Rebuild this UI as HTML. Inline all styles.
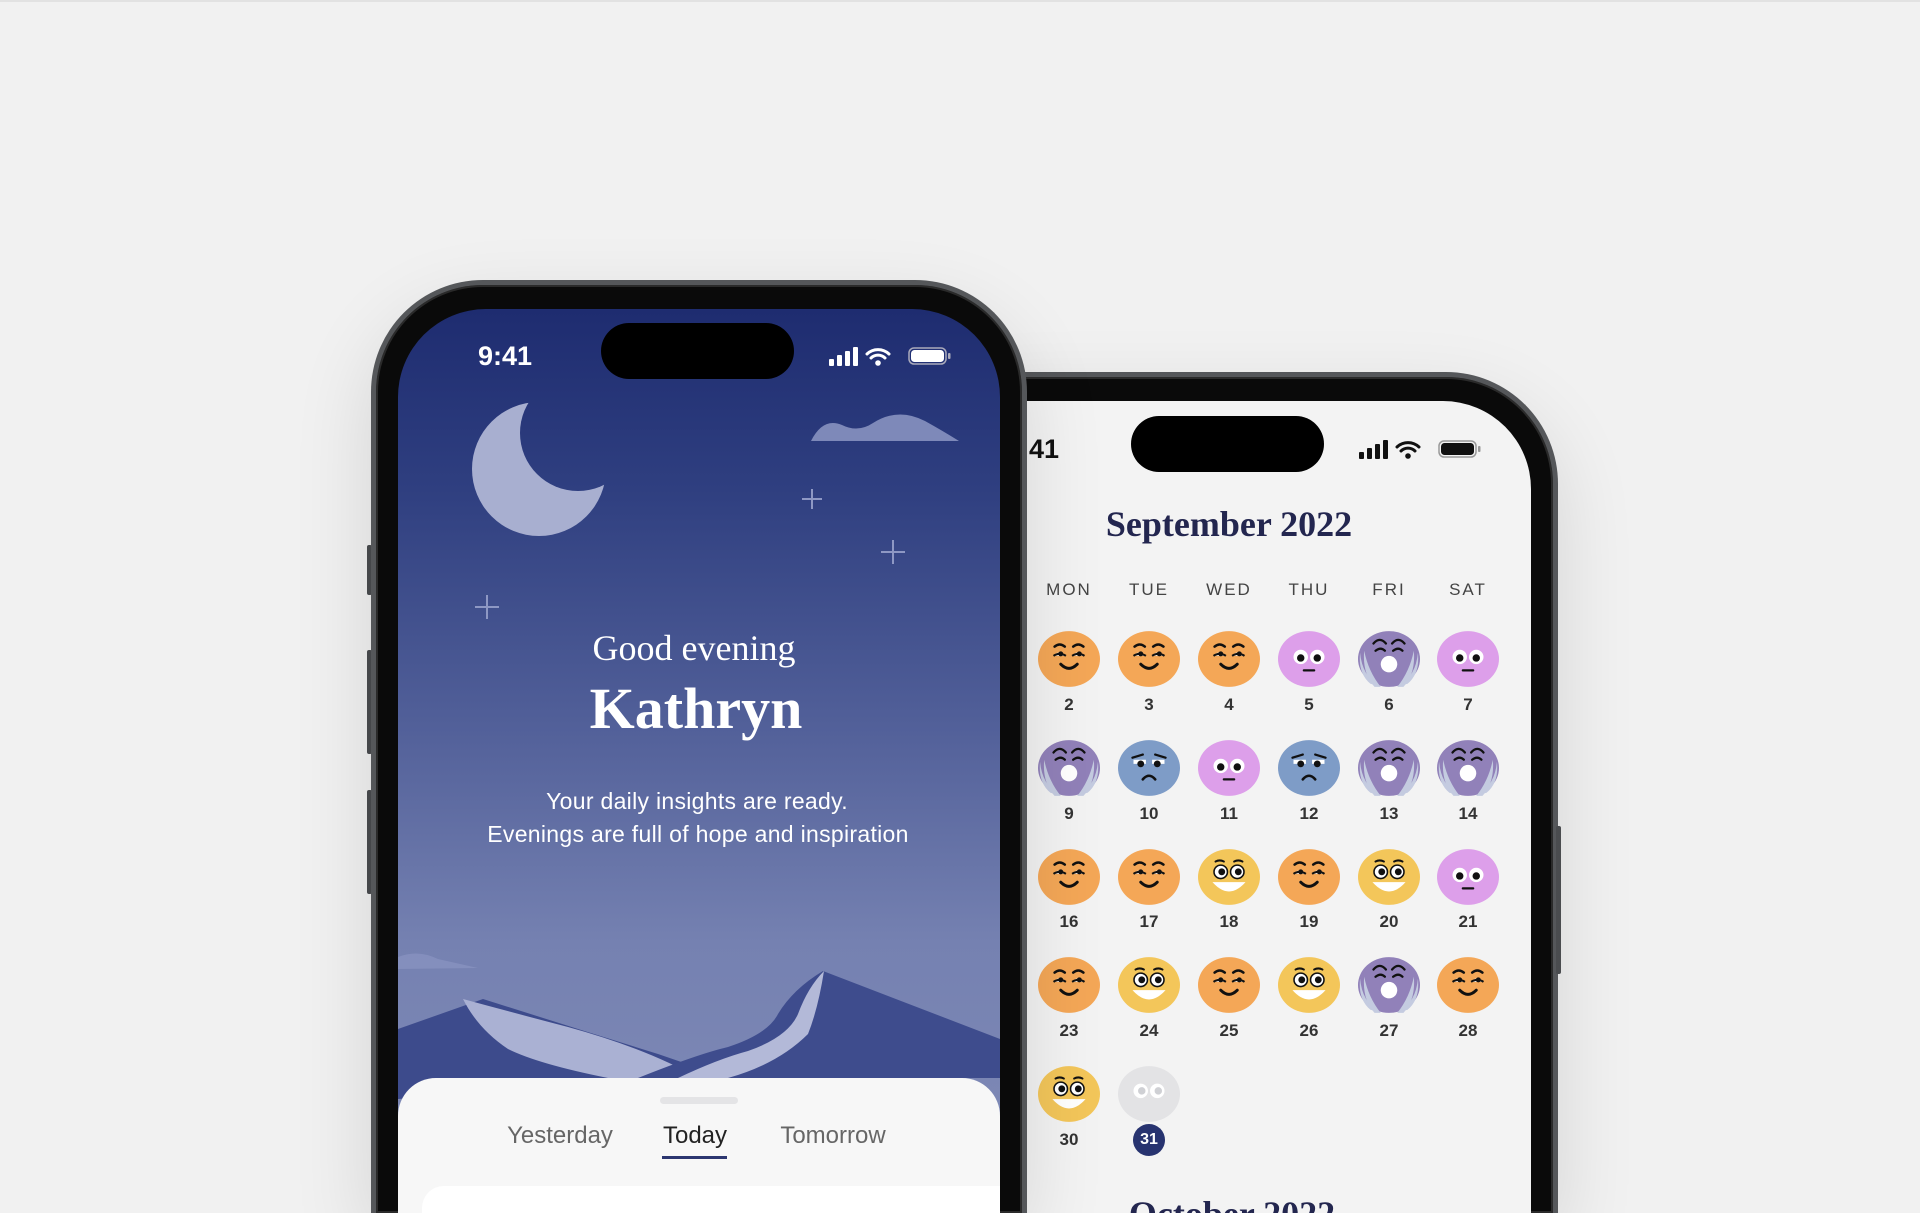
<!DOCTYPE html>
<html><head><meta charset="utf-8"><style>
*{margin:0;padding:0;box-sizing:border-box}
html,body{width:1920px;height:1213px;overflow:hidden}
body{background:#f1f1f1;font-family:"Liberation Sans",sans-serif}
#wrap{position:relative;width:1920px;height:1213px;overflow:hidden;background:#f1f1f1}
.topline{position:absolute;left:0;top:0;width:1920px;height:2px;background:#e2e2e2}
.phone{position:absolute;width:656px;border-radius:112px 112px 0 0;background:#0a0a0a;border:5px solid #55575a;border-bottom:none;box-shadow:0 0 0 2px #2a2a2a inset,0 30px 80px rgba(0,0,0,.12);overflow:hidden}
.screen{position:absolute;left:22px;top:24px;width:602px;border-radius:88px 88px 0 0;overflow:hidden}
.island{position:absolute;width:193px;height:56px;border-radius:28px;background:#000}
.btn{position:absolute;width:5px;background:#4a4c4f;border-radius:2px}
.abs{position:absolute}
.c{position:absolute;transform:translateX(-50%);white-space:nowrap}
.wd{position:absolute;transform:translateX(-50%);font-size:17px;letter-spacing:2px;color:#444;top:580px}
.num{position:absolute;transform:translateX(-50%);font-size:17px;font-weight:bold;color:#333}
.face{position:absolute;width:62px;height:58px}
</style></head><body><div id="wrap">
<div class="topline"></div>
<svg width="0" height="0" style="position:absolute">
<defs>
<g id="happy"><ellipse cx="30" cy="28" rx="30" ry="27" fill="#f4a757"/>
<path d="M16 16q5-4 10 0M34 16q5-4 10 0" stroke="#111" stroke-width="2.4" fill="none" stroke-linecap="round"/>
<path d="M15 25q6-7 12 0zM33 25q6-7 12 0z" fill="#fff"/><circle cx="22" cy="23" r="2.4" fill="#111"/><circle cx="40" cy="23" r="2.4" fill="#111"/>
<path d="M15 25q6-4 12 0M33 25q6-4 12 0" stroke="#111" stroke-width="2" fill="none"/>
<path d="M22 33q8 8 16 0" stroke="#111" stroke-width="2.8" fill="none" stroke-linecap="round"/></g>
<g id="neutral"><ellipse cx="30" cy="28" rx="30" ry="27" fill="#dd9fea"/>
<circle cx="22" cy="26" r="7" fill="#fff"/><circle cx="38" cy="26" r="7" fill="#fff"/><circle cx="22" cy="27" r="3.6" fill="#111"/><circle cx="38" cy="27" r="3.6" fill="#111"/>
<path d="M25 39h10" stroke="#111" stroke-width="2.2" stroke-linecap="round"/></g>
<g id="cry"><ellipse cx="30" cy="28" rx="30" ry="27" fill="#9181b9"/>
<path d="M2 22Q4 44 20 54L12 52Q0 42 2 22zM58 22Q56 44 40 54L48 52Q60 42 58 22z" fill="#c4cbe0"/>
<path d="M6 20Q10 40 22 55L16 55Q4 42 6 20zM54 20Q50 40 38 55L44 55Q56 42 54 20z" fill="#c4cbe0"/>
<path d="M15 13q6-7 12 0M33 13q6-7 12 0M17 20q5-4 9 0M34 20q5-4 9 0" stroke="#111" stroke-width="2.2" fill="none" stroke-linecap="round"/>
<circle cx="30" cy="33" r="8" fill="#fff"/></g>
<g id="sad"><ellipse cx="30" cy="28" rx="30" ry="27" fill="#7e9cc7"/>
<path d="M14 18l10-3M46 18l-10-3" stroke="#111" stroke-width="2.2" stroke-linecap="round"/>
<path d="M15 22h12M33 22h12" stroke="#fff" stroke-width="4"/><circle cx="22" cy="24" r="3.3" fill="#111"/><circle cx="38" cy="24" r="3.3" fill="#111"/>
<path d="M24 39q6-7 12 0" stroke="#111" stroke-width="2.5" fill="none" stroke-linecap="round"/></g>
<g id="joy"><ellipse cx="30" cy="28" rx="30" ry="27" fill="#f3c65a"/>
<path d="M17 13q4-2 8 0M35 13q4-2 8 0" stroke="#111" stroke-width="2" fill="none" stroke-linecap="round"/>
<circle cx="22" cy="23" r="6.5" fill="#fff" stroke="#111" stroke-width="1.5"/><circle cx="38" cy="23" r="6.5" fill="#fff" stroke="#111" stroke-width="1.5"/><circle cx="23" cy="23" r="3.3" fill="#111"/><circle cx="39" cy="23" r="3.3" fill="#111"/>
<path d="M14 33q16 18 32 0z" fill="#fff"/></g>
<g id="grey"><ellipse cx="30" cy="28" rx="30" ry="27" fill="#e3e3e5"/>
<circle cx="22" cy="25" r="7" fill="#fff"/><circle cx="38" cy="25" r="7" fill="#fff"/><circle cx="23" cy="25" r="3.6" fill="#cfd0d4"/><circle cx="39" cy="25" r="3.6" fill="#cfd0d4"/></g>
</defs></svg>

<div class="phone" style="left:902px;top:372px;height:841px">
  <div class="screen" style="background:#f3f3f3;height:812px"></div>
</div>
<div class="btn" style="left:1556px;top:826px;height:148px"></div>
<div class="island" style="left:1131px;top:416px"></div>
<div class="abs" style="left:1020px;top:434px;font-size:27px;font-weight:bold;color:#111">:41</div>
<svg class="abs" style="left:1359px;top:438px" width="124" height="22" viewBox="0 0 124 22">
<rect x="0" y="14" width="5" height="7" rx="1" fill="#111"/><rect x="8" y="10" width="5" height="11" rx="1" fill="#111"/><rect x="16" y="6" width="5" height="15" rx="1" fill="#111"/><rect x="24" y="2" width="5" height="19" rx="1" fill="#111"/>
<path d="M38 9a16 16 0 0 1 22 0M42 13a10 10 0 0 1 14 0" stroke="#111" stroke-width="3" fill="none" stroke-linecap="round"/><circle cx="49" cy="18" r="2.8" fill="#111"/>
<rect x="80" y="3" width="37" height="16" rx="5" fill="none" stroke="#999" stroke-width="1.5"/><rect x="82" y="5" width="33" height="12" rx="3.5" fill="#111"/><rect x="119" y="8" width="2.5" height="6" rx="1" fill="#999"/></svg>
<div class="c" style="left:1229px;top:503px;font-family:'Liberation Serif',serif;font-size:36px;color:#23264f;font-weight:600">September 2022</div>
<div class="wd" style="left:1069px">MON</div><div class="wd" style="left:1149px">TUE</div><div class="wd" style="left:1229px">WED</div><div class="wd" style="left:1309px">THU</div><div class="wd" style="left:1389px">FRI</div><div class="wd" style="left:1468px">SAT</div>

<svg class="face" style="left:1038px;top:630px" viewBox="0 0 60 56"><use href="#happy"/></svg>
<svg class="face" style="left:1118px;top:630px" viewBox="0 0 60 56"><use href="#happy"/></svg>
<svg class="face" style="left:1198px;top:630px" viewBox="0 0 60 56"><use href="#happy"/></svg>
<svg class="face" style="left:1278px;top:630px" viewBox="0 0 60 56"><use href="#neutral"/></svg>
<svg class="face" style="left:1358px;top:630px" viewBox="0 0 60 56"><use href="#cry"/></svg>
<svg class="face" style="left:1437px;top:630px" viewBox="0 0 60 56"><use href="#neutral"/></svg>

<svg class="face" style="left:1038px;top:739px" viewBox="0 0 60 56"><use href="#cry"/></svg>
<svg class="face" style="left:1118px;top:739px" viewBox="0 0 60 56"><use href="#sad"/></svg>
<svg class="face" style="left:1198px;top:739px" viewBox="0 0 60 56"><use href="#neutral"/></svg>
<svg class="face" style="left:1278px;top:739px" viewBox="0 0 60 56"><use href="#sad"/></svg>
<svg class="face" style="left:1358px;top:739px" viewBox="0 0 60 56"><use href="#cry"/></svg>
<svg class="face" style="left:1437px;top:739px" viewBox="0 0 60 56"><use href="#cry"/></svg>

<svg class="face" style="left:1038px;top:848px" viewBox="0 0 60 56"><use href="#happy"/></svg>
<svg class="face" style="left:1118px;top:848px" viewBox="0 0 60 56"><use href="#happy"/></svg>
<svg class="face" style="left:1198px;top:848px" viewBox="0 0 60 56"><use href="#joy"/></svg>
<svg class="face" style="left:1278px;top:848px" viewBox="0 0 60 56"><use href="#happy"/></svg>
<svg class="face" style="left:1358px;top:848px" viewBox="0 0 60 56"><use href="#joy"/></svg>
<svg class="face" style="left:1437px;top:848px" viewBox="0 0 60 56"><use href="#neutral"/></svg>

<svg class="face" style="left:1038px;top:956px" viewBox="0 0 60 56"><use href="#happy"/></svg>
<svg class="face" style="left:1118px;top:956px" viewBox="0 0 60 56"><use href="#joy"/></svg>
<svg class="face" style="left:1198px;top:956px" viewBox="0 0 60 56"><use href="#happy"/></svg>
<svg class="face" style="left:1278px;top:956px" viewBox="0 0 60 56"><use href="#joy"/></svg>
<svg class="face" style="left:1358px;top:956px" viewBox="0 0 60 56"><use href="#cry"/></svg>
<svg class="face" style="left:1437px;top:956px" viewBox="0 0 60 56"><use href="#happy"/></svg>

<svg class="face" style="left:1038px;top:1065px" viewBox="0 0 60 56"><use href="#joy"/></svg>
<svg class="face" style="left:1118px;top:1065px" viewBox="0 0 60 56"><use href="#grey"/></svg>

<div class="num" style="left:1069px;top:695px">2</div><div class="num" style="left:1149px;top:695px">3</div><div class="num" style="left:1229px;top:695px">4</div><div class="num" style="left:1309px;top:695px">5</div><div class="num" style="left:1389px;top:695px">6</div><div class="num" style="left:1468px;top:695px">7</div>
<div class="num" style="left:1069px;top:804px">9</div><div class="num" style="left:1149px;top:804px">10</div><div class="num" style="left:1229px;top:804px">11</div><div class="num" style="left:1309px;top:804px">12</div><div class="num" style="left:1389px;top:804px">13</div><div class="num" style="left:1468px;top:804px">14</div>
<div class="num" style="left:1069px;top:912px">16</div><div class="num" style="left:1149px;top:912px">17</div><div class="num" style="left:1229px;top:912px">18</div><div class="num" style="left:1309px;top:912px">19</div><div class="num" style="left:1389px;top:912px">20</div><div class="num" style="left:1468px;top:912px">21</div>
<div class="num" style="left:1069px;top:1021px">23</div><div class="num" style="left:1149px;top:1021px">24</div><div class="num" style="left:1229px;top:1021px">25</div><div class="num" style="left:1309px;top:1021px">26</div><div class="num" style="left:1389px;top:1021px">27</div><div class="num" style="left:1468px;top:1021px">28</div>
<div class="num" style="left:1069px;top:1130px">30</div>
<div class="abs" style="left:1133px;top:1124px;width:32px;height:32px;border-radius:50%;background:#27336f;color:#fff;font-weight:bold;font-size:16px;text-align:center;line-height:32px">31</div>
<div class="abs" style="left:1082px;top:1193px;width:300px;height:20px;overflow:hidden"><div class="c" style="left:150px;top:0;font-family:'Liberation Serif',serif;font-size:36px;color:#23264f;font-weight:600">October 2022</div></div>

<div class="btn" style="left:367px;top:545px;height:50px"></div>
<div class="btn" style="left:367px;top:650px;height:104px"></div>
<div class="btn" style="left:367px;top:790px;height:104px"></div>
<div class="phone" style="left:371px;top:280px;height:933px">
  <div class="screen" style="height:904px;background:linear-gradient(#1e2c70 0%,#2f3f80 20%,#53619a 47%,#7581b1 70%,#7d88b5 90%)">
    <svg class="abs" style="left:0;top:0" width="602" height="904">
      <defs><mask id="mm"><rect width="602" height="904" fill="#fff"/><circle cx="180" cy="124" r="58" fill="#000"/></mask></defs>
      <circle cx="141" cy="160" r="67" fill="#a8afd0" mask="url(#mm)"/>
      <path d="M413 132Q425 108 444 116Q460 124 475 114Q500 98 527 112Q545 122 561 132Z" fill="#7e89b9"/>
      <path d="M414 180v20M404 190h20M495 231v24M483 243h24M89 286v24M77 298h24" stroke="#8e98c4" stroke-width="2"/>
      <path d="M0 648Q20 640 40 650L80 659L0 660Z" fill="#8a94c2" opacity=".7"/>
      <path d="M0 720L85 690L180 720L260 745L330 769L0 790Z" fill="#3d4b8c"/>
      <path d="M65 690Q120 705 170 718Q250 740 300 769L210 769Q140 755 110 740Q80 720 65 690Z" fill="#aab1d3"/>
      <path d="M240 769Q300 745 330 738Q370 725 380 705Q395 680 425 662L602 730L602 769Z" fill="#3e4c8d"/>
      <path d="M280 769Q320 750 350 742Q390 728 400 705Q410 678 426 662Q420 700 410 725Q380 755 330 769Z" fill="#b3b9d8"/>
    </svg>
    <div class="abs" style="left:0;top:769px;width:602px;height:135px;background:#f7f7f7;border-radius:38px 38px 0 0"></div>
    <div class="abs" style="left:262px;top:788px;width:78px;height:7px;border-radius:4px;background:#e4e4e6"></div>
    <div class="abs" style="left:24px;top:877px;width:578px;height:27px;border-radius:22px 0 0 0;background:#fff"></div>
  </div>
</div>
<div class="island" style="left:601px;top:323px"></div>
<div class="abs" style="left:478px;top:341px;font-size:27px;font-weight:bold;color:#fff">9:41</div>
<svg class="abs" style="left:829px;top:345px" width="124" height="22" viewBox="0 0 124 22">
<rect x="0" y="14" width="5" height="7" rx="1" fill="#fff"/><rect x="8" y="10" width="5" height="11" rx="1" fill="#fff"/><rect x="16" y="6" width="5" height="15" rx="1" fill="#fff"/><rect x="24" y="2" width="5" height="19" rx="1" fill="#fff"/>
<path d="M38 9a16 16 0 0 1 22 0M42 13a10 10 0 0 1 14 0" stroke="#fff" stroke-width="3" fill="none" stroke-linecap="round"/><circle cx="49" cy="18" r="2.8" fill="#fff"/>
<rect x="80" y="3" width="37" height="16" rx="5" fill="none" stroke="#aab" stroke-width="1.5"/><rect x="82" y="5" width="33" height="12" rx="3.5" fill="#fff"/><rect x="119" y="8" width="2.5" height="6" rx="1" fill="#aab"/></svg>
<div class="c" style="left:694px;top:627px;font-family:'Liberation Serif',serif;font-size:36px;color:#fff">Good evening</div>
<div class="c" style="left:696px;top:675px;font-family:'Liberation Serif',serif;font-size:58px;font-weight:bold;color:#fff">Kathryn</div>
<div class="c" style="left:697px;top:788px;font-size:23px;color:#fff;letter-spacing:.3px">Your daily insights are ready.</div>
<div class="c" style="left:698px;top:821px;font-size:23px;color:#fff;letter-spacing:.3px">Evenings are full of hope and inspiration</div>
<div class="c" style="left:560px;top:1122px;font-size:24px;color:#666">Yesterday</div>
<div class="c" style="left:695px;top:1122px;font-size:24px;color:#222">Today</div>
<div class="abs" style="left:662px;top:1156px;width:65px;height:3px;background:#2c3670"></div>
<div class="c" style="left:833px;top:1122px;font-size:24px;color:#666">Tomorrow</div>
</div></body></html>
